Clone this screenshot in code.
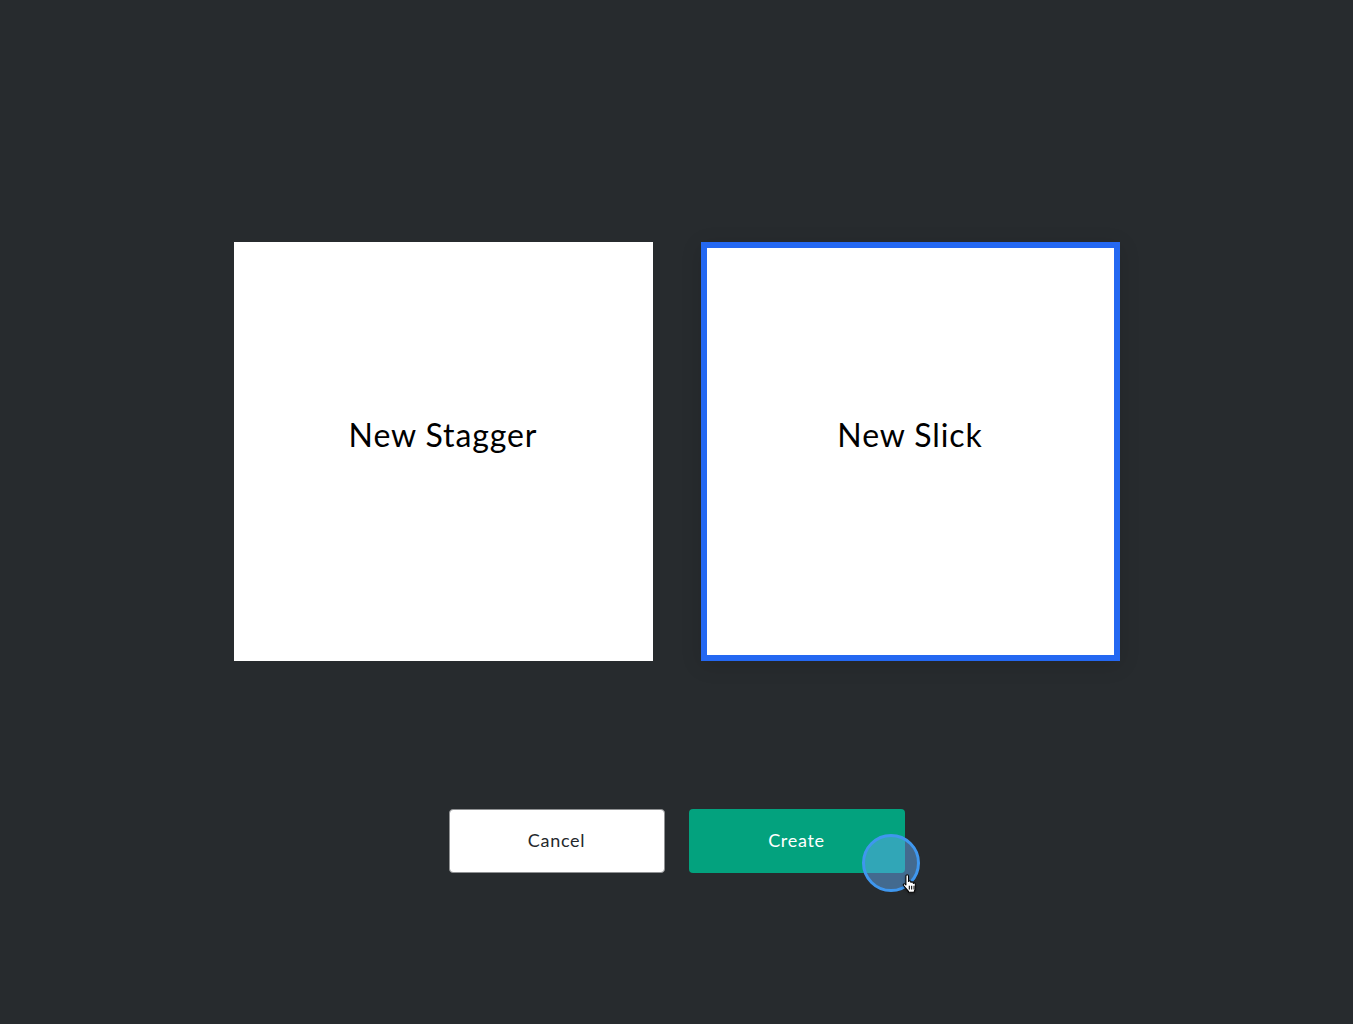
<script>
  let selected = 'slick';
</script>

<div class="screen">
  <div class="cards">
    <button class="card" class:active={selected === 'stagger'} onclick={() => (selected = 'stagger')}>New Stagger</button>
    <button class="card" class:active={selected === 'slick'} onclick={() => (selected = 'slick')}>New Slick</button>
  </div>

  <div class="actions">
    <button class="btn cancel">Cancel</button>
    <button class="btn create">Create</button>
  </div>

  <!-- recorded click indicator + pointer -->
  <div class="touch"></div>
  <svg class="pointer" width="19" height="20" viewBox="0 0 15 17" aria-hidden="true">
    <path
      d="M3.6 1.8c0-1.5 2.2-1.5 2.2 0v4.6c.3-.9 1.9-.8 2 .3l.1.5c.3-.8 1.8-.7 1.9.3l.1.5c.4-.7 1.7-.4 1.7.6v3.3c0 1.2-.5 2-.9 2.8v.8H5.8v-.8L1.6 9.9c-.8-1 .5-2.2 1.4-1.3l.6.7z"
      fill="#fff"
      stroke="#000"
      stroke-width="0.9"
      stroke-linejoin="round"
    />
    <path d="M6.5 10v3.2M8.5 10v3.2M10.5 10v3.2" stroke="#000" stroke-width="0.9" fill="none" />
  </svg>
</div>

<style>
  :global(body) {
    margin: 0;
    background: #272b2e;
  }

  .screen {
    position: relative;
    min-height: 1024px;
    box-sizing: border-box;
    padding-top: 242px;
    display: flex;
    flex-direction: column;
    align-items: center;
    background: #272b2e;
    font-family: 'Lato', 'Liberation Sans', sans-serif;
  }

  .cards {
    display: flex;
    gap: 48px;
  }

  .card {
    width: 419px;
    height: 419px;
    box-sizing: border-box;
    padding: 0 0 34px;
    border: none;
    background: #fff;
    color: #000;
    font-family: inherit;
    font-size: 32px;
    letter-spacing: 0.9px;
    cursor: pointer;
  }
  .card.active {
    border: 6px solid #2468f2;
    box-shadow: 0 4px 20px rgba(0, 0, 0, 0.12);
  }

  .actions {
    display: flex;
    gap: 24px;
    margin-top: 148px;
  }

  .btn {
    width: 216px;
    height: 64px;
    box-sizing: border-box;
    padding: 0 0 2px;
    border-radius: 4px;
    font-family: inherit;
    font-size: 18px;
    letter-spacing: 0.7px;
    cursor: pointer;
  }
  .cancel {
    background: #fff;
    color: #24282b;
    border: 1px solid #8f9193;
  }
  .create {
    background: #03a27e;
    color: #fff;
    border: none;
  }

  .touch {
    position: absolute;
    left: 862px;
    top: 834px;
    width: 58px;
    height: 58px;
    box-sizing: border-box;
    border-radius: 50%;
    border: 3px solid #3f97ee;
    background: rgba(96, 170, 240, 0.5);
  }
  .pointer {
    position: absolute;
    left: 901px;
    top: 874px;
    filter: drop-shadow(0 1px 1px rgba(0, 0, 0, 0.35));
  }
</style>
